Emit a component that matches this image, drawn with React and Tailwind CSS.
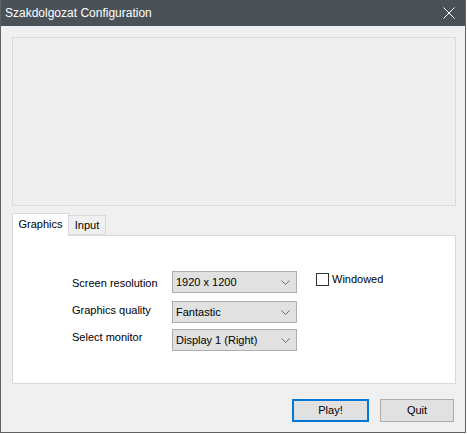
import React from 'react';

const Combo = ({ value }) => (
  <div className="flex h-[22px] w-[125px] items-center justify-between border border-[#adadad] bg-[#e1e1e1] pl-[3px] pr-[6px]">
    <span className="text-[11px] text-black">{value}</span>
    <svg width="9" height="5" viewBox="0 0 9 5" fill="none">
      <path d="M0.5 0.5 L4.5 4.5 L8.5 0.5" stroke="#6d6d6d" strokeWidth="1" />
    </svg>
  </div>
);

const rows = [
  ['Screen resolution', '1920 x 1200', 'mt-0', 'pt-[3px]'],
  ['Graphics quality', 'Fantastic', 'mt-[8px]', 'pb-[3px]'],
  ['Select monitor', 'Display 1 (Right)', 'mt-[6px]', 'pb-[5px]'],
];

export default function App() {
  return (
    <div className="h-[434px] w-[467px] bg-white font-['Liberation_Sans',Arial,sans-serif]">
      <div className="flex h-[433px] w-[466px] flex-col border-b border-l border-r border-[#5f6368] bg-[#f0f0f0]">
        {/* title bar */}
        <div className="flex h-[26px] shrink-0 items-center justify-between bg-[#4a5157] pl-[4px] pr-[10px]">
          <span className="text-[12px] text-white">Szakdolgozat Configuration</span>
          <svg width="12" height="12" viewBox="0 0 12 12">
            <path d="M0.5 0.5 L11.5 11.5 M11.5 0.5 L0.5 11.5" stroke="#ffffff" strokeWidth="1" />
          </svg>
        </div>

        {/* banner area */}
        <div className="ml-[11px] mt-[11px] h-[169px] w-[444px] border border-[#dadada] bg-[#efefef]" />

        {/* tabs */}
        <div className="ml-[11px] mt-[7px] flex items-end">
          <div className="relative z-10 -mb-px flex h-[23px] w-[57px] items-center justify-center border border-b-0 border-[#d9d9d9] bg-white pb-[2px] text-[11px]">
            Graphics
          </div>
          <div className="flex h-[20px] w-[37px] items-center justify-center border border-l-0 border-[#d9d9d9] bg-[#f0f0f0] text-[11px]">
            Input
          </div>
        </div>
        <div className="ml-[11px] h-[149px] w-[444px] border border-[#d9d9d9] bg-white pl-[59px] pt-[35px]">
          <div className="flex gap-[19px]">
            <div className="flex flex-col">
              {rows.map(([label, value, mt, pad]) => (
                <div key={label} className={`flex items-center ${mt}`}>
                  <span className={`w-[100px] text-[11px] text-black ${pad}`}>{label}</span>
                  <Combo value={value} />
                </div>
              ))}
            </div>
            <label className="mt-[2px] flex h-[13px] items-center gap-[3px] text-[11px]">
              <span className="h-[13px] w-[13px] border border-[#333333] bg-white" />
              Windowed
            </label>
          </div>
        </div>

        {/* buttons */}
        <div className="mr-[11px] mt-[15px] flex justify-end gap-[11px]">
          <button className="h-[23px] w-[77px] border-2 border-[#0078d7] bg-[#e1e1e1] text-[11px]">Play!</button>
          <button className="h-[23px] w-[74px] border border-[#adadad] bg-[#e1e1e1] text-[11px]">Quit</button>
        </div>
      </div>
    </div>
  );
}
